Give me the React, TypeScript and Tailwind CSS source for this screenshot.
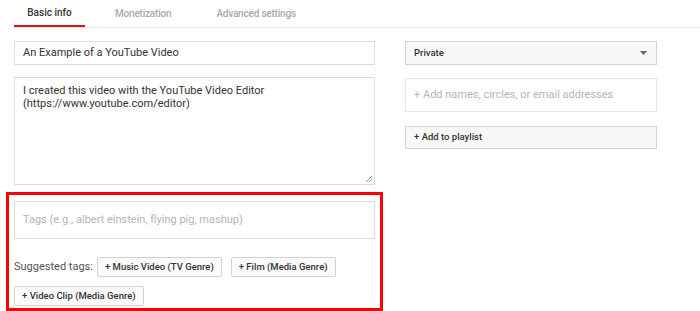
const tabs = ['Basic info', 'Monetization', 'Advanced settings'];

const suggested = ['+ Music Video (TV Genre)', '+ Film (Media Genre)', '+ Video Clip (Media Genre)'];

function TagButton({ label }: { label: string }) {
  return (
    <button className="h-[20px] px-[7px] border border-[#d3d3d3] rounded-[2px] bg-[#fbfbfb] text-[9.5px] font-medium text-[#333] leading-none whitespace-nowrap">
      {label}
    </button>
  );
}

export default function App() {
  return (
    <div className="w-[700px] h-[311px] bg-white overflow-hidden" style={{ fontFamily: 'Roboto, Arial, sans-serif' }}>
      {/* Tabs */}
      <div className="ml-[14px] flex border-b border-[#e8e8e8] h-[28px]">
        {tabs.map((tab, i) => (
          <div
            key={tab}
            className={`flex items-center whitespace-nowrap text-[10px] font-medium ${i === 0 ? 'text-[#333] border-b-2 border-[#cc181e] w-[71px] justify-center' : 'text-[#aaa] px-[15px] ml-[15px] tracking-[-0.2px]'}`}
          >
            {tab}
          </div>
        ))}
      </div>

      <div className="flex gap-[30px] pl-[14px] pt-[13px]">
        {/* Left column */}
        <div className="w-[361px] flex flex-col">
          <div className="h-[24px] border border-[#dcdcdc] flex items-center px-[8px] text-[11px] text-[#333]">
            An Example of a YouTube Video
          </div>
          <div className="relative mt-[12px] h-[108px] border border-[#dcdcdc] px-[8px] pt-[6px] text-[11px] leading-[13px] text-[#333]">
            I created this video with the YouTube Video Editor
            <br />
            (https://www.youtube.com/editor)
            <svg className="absolute right-[1px] bottom-[1px]" width="8" height="8" viewBox="0 0 8 8">
              <path d="M7 1 L1 7 M7 4 L4 7" stroke="#999" strokeWidth="1" />
            </svg>
          </div>

          {/* Highlighted tags section */}
          <div className="mt-[7px] -mx-[8px] border-[3px] border-[#ff0000] px-[5px] pt-[6px] pb-[2px]">
            <div className="h-[38px] border border-[#dcdcdc] flex items-center px-[8px] text-[11px] text-[#b5b5b5]">
              Tags (e.g., albert einstein, flying pig, mashup)
            </div>
            <div className="mt-[18px] flex flex-wrap items-center gap-x-[9px] gap-y-[9px]">
              <span className="text-[11px] text-[#555] -mr-[5px]">Suggested tags:</span>
              {suggested.map((s) => (
                <TagButton key={s} label={s} />
              ))}
            </div>
          </div>
        </div>

        {/* Right column */}
        <div className="w-[252px] flex flex-col">
          <div className="h-[24px] border border-[#d3d3d3] bg-[#f8f8f8] flex items-center justify-between px-[8px] text-[9.5px] font-medium text-[#333]">
            Private
            <svg width="7" height="4" viewBox="0 0 7 4" className="mr-[1px]">
              <path d="M0 0 L7 0 L3.5 4 Z" fill="#666" />
            </svg>
          </div>
          <div className="mt-[13px] h-[34px] border border-[#e5e5e5] flex items-center px-[8px] text-[11px] text-[#b5b5b5]">
            + Add names, circles, or email addresses
          </div>
          <div className="mt-[14px] h-[23px] border border-[#d3d3d3] bg-[#f8f8f8] flex items-center px-[8px] text-[9.5px] font-medium text-[#333]">
            + Add to playlist
          </div>
        </div>
      </div>
    </div>
  );
}
